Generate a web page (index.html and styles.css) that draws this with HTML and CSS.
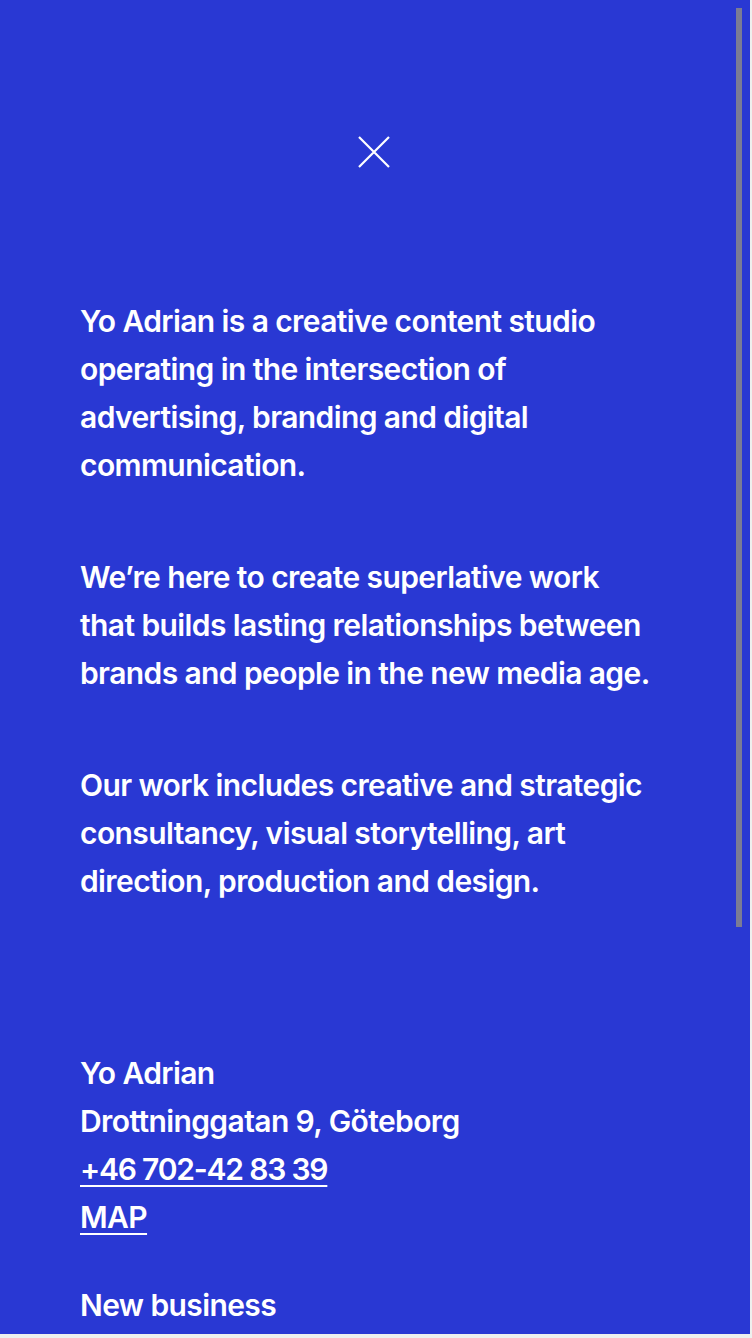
FILE: index.html
```html
<!DOCTYPE html>
<html lang="en">
<head>
<meta charset="utf-8">
<title>Yo Adrian</title>
<link rel="stylesheet" href="styles.css">
</head>
<body>
<div class="overlay">
  <div class="close-row">
    <button class="close" aria-label="Close">
      <svg width="32" height="32" viewBox="0 0 32 32"><path d="M1 1 L31 31 M31 1 L1 31" stroke="#fff" stroke-width="2.2" fill="none"/></svg>
    </button>
  </div>
  <div class="content">
    <p class="para">Yo Adrian is a creative content studio<br>operating in the intersection of<br>advertising, branding and digital<br>communication.</p>
    <p class="para">We’re here to create superlative work<br>that builds lasting relationships between<br>brands and people in the new media age.</p>
    <p class="para">Our work includes creative and strategic<br>consultancy, visual storytelling, art<br>direction, production and design.</p>
    <div class="address">
      <div>Yo Adrian</div>
      <div>Drottninggatan 9, Göteborg</div>
      <div><a class="phone" href="#">+46 702-42 83 39</a></div>
      <div><a href="#">MAP</a></div>
    </div>
    <div class="newbiz">New business</div>
  </div>
  <div class="thumb"></div>
</div>
</body>
</html>
```
FILE: styles.css
```css
html, body {
  margin: 0;
  padding: 0;
}
body {
  background: #eef0ee;
  width: 752px;
  height: 1338px;
  overflow: hidden;
}
.overlay {
  position: relative;
  width: 750px;
  height: 1334px;
  background: #2938d3;
  color: #fff;
  font-family: Inter, "Noto Sans", sans-serif;
  font-weight: 600;
  font-size: 30px;
  line-height: 48px;
  letter-spacing: -0.6px;
  overflow: hidden;
}
.close-row {
  display: flex;
  justify-content: center;
  padding-top: 136px;
}
.close {
  background: none;
  border: 0;
  padding: 0;
  width: 32px;
  height: 32px;
  margin-left: -2px;
  display: block;
}
.close svg { display: block; }
.content {
  padding: 129px 0 0 80px;
  white-space: nowrap;
}
.para {
  margin: 0 0 64px 0;
}
.para:nth-of-type(3) {
  margin-bottom: 144px;
}
.address {
  margin-bottom: 40px;
}
.address a {
  color: #fff;
  text-decoration: underline;
  text-decoration-thickness: 2px;
  text-underline-offset: 5px;
}
.address .phone {
  letter-spacing: -1.2px;
}
.thumb {
  position: absolute;
  top: 8px;
  right: 8px;
  width: 6px;
  height: 919px;
  background: #7b7b95;
}
```
